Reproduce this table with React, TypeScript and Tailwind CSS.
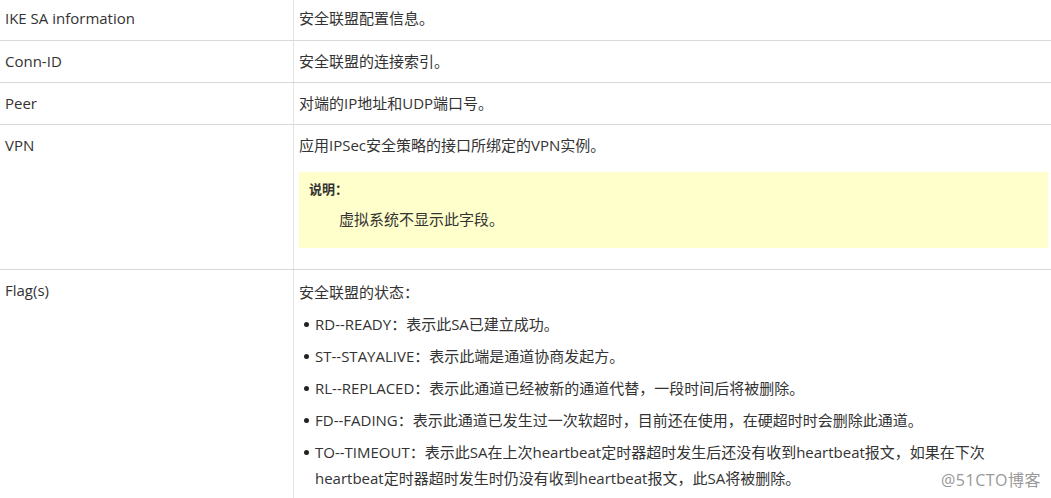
const items = [
  'RD--READY：表示此SA已建立成功。',
  'ST--STAYALIVE：表示此端是通道协商发起方。',
  'RL--REPLACED：表示此通道已经被新的通道代替，一段时间后将被删除。',
  'FD--FADING：表示此通道已发生过一次软超时，目前还在使用，在硬超时时会删除此通道。',
  'TO--TIMEOUT：表示此SA在上次heartbeat定时器超时发生后还没有收到heartbeat报文，如果在下次heartbeat定时器超时发生时仍没有收到heartbeat报文，此SA将被删除。',
];

const Row = ({ name, children, first }: { name: string; children: React.ReactNode; first?: boolean }) => (
  <div className={`grid grid-cols-[294px_1fr] ${first ? '' : 'border-t border-[#d9d9d9]'}`}>
    <div className={`border-r border-[#e3e3e3] pl-[5px] ${first ? 'pt-[7px] pb-[11px]' : 'pt-[9px] pb-[10px]'}`}>{name}</div>
    <div className={`pl-[5px] pr-[3px] ${first ? 'pt-[7px] pb-[11px]' : 'pt-[9px] pb-[10px]'}`}>{children}</div>
  </div>
);

export default function App() {
  return (
    <div
      className="relative h-[498px] w-[1051px] overflow-hidden bg-white text-[15px] leading-[22px] text-[#333]"
      style={{ fontFamily: '"Open Sans", "Noto Sans CJK SC", sans-serif' }}
    >
      <Row name="IKE SA information" first>
        安全联盟配置信息。
      </Row>
      <Row name="Conn-ID">安全联盟的连接索引。</Row>
      <Row name="Peer">对端的IP地址和UDP端口号。</Row>
      <Row name="VPN">
        <p>应用IPSec安全策略的接口所绑定的VPN实例。</p>
        <div className="mt-[16px] mb-[11px] h-[76px] bg-[#ffffcc] pl-[10px] pt-[6px]">
          <p className="text-[13px] font-bold">说明：</p>
          <p className="mt-[8px] pl-[30px]">虚拟系统不显示此字段。</p>
        </div>
      </Row>
      <Row name="Flag(s)">
        <p className="pt-[2px]">安全联盟的状态：</p>
        <ul className="mt-[8px] flex flex-col gap-[6px] pl-[16px] pr-[50px] leading-[26px]">
          {items.map((t) => (
            <li key={t} className="relative">
              <span className="absolute left-[-11px] top-[11px] size-[5px] rounded-full bg-[#222]" />
              {t}
            </li>
          ))}
        </ul>
      </Row>
      <div className="absolute bottom-[7px] right-[10px] text-[16px] tracking-[0.5px] text-[#999]">@51CTO博客</div>
    </div>
  );
}
